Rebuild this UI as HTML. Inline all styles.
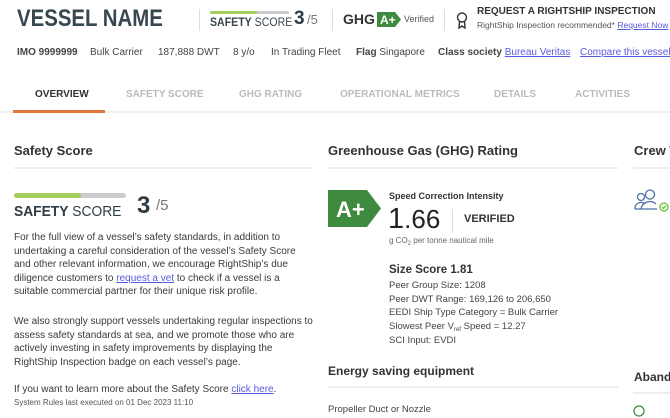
<!DOCTYPE html>
<html><head><meta charset="utf-8"><style>
*{margin:0;padding:0;box-sizing:border-box}
body{width:670px;height:413px;overflow:hidden;background:#fff;font-family:"Liberation Sans",sans-serif;color:#333;position:relative}
.a{position:absolute;white-space:nowrap}
.dv{position:absolute;width:1px;background:#ddd}
.hl{position:absolute;height:2px;background:#eee}
.tab{position:absolute;top:89px;font-size:10px;font-weight:bold;color:#bbb}
a{color:#5a5ae0;text-decoration:underline}
.p{position:absolute;left:14px;font-size:10px;line-height:13.6px;color:#3a3a3a;width:300px}
.m{font-size:10px;color:#444}
sub{line-height:0;vertical-align:-2px}
</style></head><body>
<div class="a" style="left:17px;top:5px;font-size:24px;font-weight:bold;color:#37474f;transform:scaleX(0.85);transform-origin:0 0">VESSEL NAME</div>
<div class="dv" style="left:199px;top:9px;height:22px"></div>
<div class="a" style="left:210px;top:11px;width:79px;height:3px;background:#ccc;border-radius:2px"></div>
<div class="a" style="left:210px;top:11px;width:47px;height:3px;background:#a5cf5b;border-radius:2px"></div>
<div class="a" style="left:210px;top:17px;font-size:11.5px;color:#37474f;transform:scaleX(0.92);transform-origin:0 0"><b>SAFETY</b> SCORE</div>
<div class="a" style="left:294px;top:8px;font-size:19px;font-weight:bold;color:#2f3b45">3</div>
<div class="a" style="left:307px;top:12px;font-size:13px;color:#777">/5</div>
<div class="dv" style="left:332px;top:9px;height:22px"></div>
<div class="a" style="left:343px;top:11px;font-size:14px;font-weight:bold;color:#333">GHG</div>
<svg class="a" style="left:377px;top:12px" width="24" height="15"><polygon points="0,0 18,0 24,7.5 18,15 0,15" fill="#3e8a3e"/><text x="3" y="12" font-size="12" font-weight="bold" fill="#fff" font-family="Liberation Sans">A+</text></svg>
<div class="a" style="left:404px;top:14px;font-size:9px;color:#555">Verified</div>
<div class="dv" style="left:444px;top:9px;height:22px"></div>
<svg class="a" style="left:456px;top:12px" width="12" height="17" fill="none" stroke="#333" stroke-width="1.4"><circle cx="6" cy="5.5" r="4.5"/><path d="M3.5 9.5 L3 16 L6 14 L9 16 L8.5 9.5"/></svg>
<div class="a" style="left:477px;top:6px;font-size:10px;font-weight:bold;color:#333">REQUEST A RIGHTSHIP INSPECTION</div>
<div class="a" style="left:477px;top:20px;font-size:8.5px;color:#555">RightShip Inspection recommended* <a>Request Now</a></div>
<div class="a m" style="left:17px;top:47px"><b>IMO 9999999</b></div>
<div class="a m" style="left:90px;top:47px">Bulk Carrier</div>
<div class="a m" style="left:158px;top:47px">187,888 DWT</div>
<div class="a m" style="left:233px;top:47px">8 y/o</div>
<div class="a m" style="left:271px;top:47px">In Trading Fleet</div>
<div class="a m" style="left:356px;top:47px"><b>Flag</b> Singapore</div>
<div class="a m" style="left:438px;top:47px"><b>Class society</b> <a>Bureau Veritas</a></div>
<div class="a m" style="left:580px;top:47px"><a>Compare this vessel</a></div>
<div class="tab" style="left:35px;color:#333">OVERVIEW</div>
<div class="tab" style="left:126px">SAFETY SCORE</div>
<div class="tab" style="left:239px">GHG RATING</div>
<div class="tab" style="left:340px">OPERATIONAL METRICS</div>
<div class="tab" style="left:494px">DETAILS</div>
<div class="tab" style="left:575px">ACTIVITIES</div>
<div class="hl" style="left:0;top:111px;width:670px;background:#f0f0f0"></div>
<div class="a" style="left:13px;top:110px;width:92px;height:3px;background:#e07a3c"></div>

<div class="a" style="left:14px;top:143px;font-size:13px;font-weight:bold;color:#333">Safety Score</div>
<div class="hl" style="left:14px;top:167px;width:298px"></div>
<div class="a" style="left:14px;top:193px;width:112px;height:5px;background:#ccc;border-radius:3px"></div>
<div class="a" style="left:14px;top:193px;width:67px;height:5px;background:#a5cf5b;border-radius:3px"></div>
<div class="a" style="left:14px;top:203px;font-size:15px;color:#2f3b45;transform:scaleX(0.92);transform-origin:0 0"><b>SAFETY</b> SCORE</div>
<div class="a" style="left:137px;top:192px;font-size:24px;font-weight:bold;color:#2f3b45">3</div>
<div class="a" style="left:156px;top:197px;font-size:15px;color:#777">/5</div>
<div class="p" style="top:231px">For the full view of a vessel’s safety standards, in addition to undertaking a careful consideration of the vessel’s Safety Score and other relevant information, we encourage RightShip’s due diligence customers to <a>request a vet</a> to check if a vessel is a suitable commercial partner for their unique risk profile.</div>
<div class="p" style="top:315px">We also strongly support vessels undertaking regular inspections to assess safety standards at sea, and we promote those who are actively investing in safety improvements by displaying the RightShip Inspection badge on each vessel’s page.</div>
<div class="p" style="top:383px">If you want to learn more about the Safety Score <a>click here</a>.</div>
<div class="a" style="left:14px;top:398px;font-size:8px;color:#555">System Rules last executed on 01 Dec 2023 11:10</div>

<div class="a" style="left:328px;top:143px;font-size:13px;font-weight:bold;color:#333">Greenhouse Gas (GHG) Rating</div>
<div class="hl" style="left:328px;top:167px;width:290px"></div>
<svg class="a" style="left:328px;top:190px" width="53" height="37"><polygon points="0,0 39,0 53,18.5 39,37 0,37" fill="#3e8a3e"/><text x="8" y="27" font-size="22" font-weight="bold" fill="#fff" font-family="Liberation Sans">A+</text></svg>
<div class="a" style="left:389px;top:191px;font-size:9px;font-weight:bold;color:#333">Speed Correction Intensity</div>
<div class="a" style="left:388px;top:203px;font-size:29px;color:#222">1<span style="font-size:26px">.66</span></div>
<div class="dv" style="left:452px;top:209px;height:24px"></div>
<div class="a" style="left:464px;top:213px;font-size:11px;font-weight:bold;color:#333">VERIFIED</div>
<div class="a" style="left:389px;top:236px;font-size:8px;color:#666">g CO<sub style="font-size:6px">2</sub> per tonne nautical mile</div>
<div class="a" style="left:389px;top:264px;font-size:11.5px;font-weight:bold;color:#333">Size Score 1.81</div>
<div class="a" style="left:389px;top:279px;font-size:9.5px;line-height:13.7px;color:#444">Peer Group Size: 1208<br>Peer DWT Range: 169,126 to 206,650<br>EEDI Ship Type Category = Bulk Carrier<br>Slowest Peer V<sub style="font-size:6px">ref</sub> Speed = 12.27<br>SCI Input: EVDI</div>
<div class="a" style="left:328px;top:364px;font-size:12px;font-weight:bold;color:#333">Energy saving equipment</div>
<div class="hl" style="left:328px;top:386px;width:290px"></div>
<div class="a" style="left:328px;top:404px;font-size:9.5px;color:#444">Propeller Duct or Nozzle</div>

<div class="a" style="left:634px;top:143px;font-size:13px;font-weight:bold;color:#333">Crew W</div>
<div class="hl" style="left:633px;top:167px;width:40px"></div>
<svg class="a" style="left:633px;top:189px" width="36" height="24" fill="none" stroke="#4a6fa5" stroke-width="1.3"><circle cx="8" cy="8" r="3.5"/><circle cx="17" cy="5.5" r="4.5"/><path d="M2 20a6 6 0 0 1 10-5"/><path d="M8 20a9 9 0 0 1 15-5"/><path d="M2 20h22"/><circle cx="31" cy="18" r="4" stroke="#6bbf3a"/><path d="M29 18l1.5 1.5 2.5-3" stroke="#6bbf3a"/></svg>
<div class="a" style="left:634px;top:370px;font-size:12px;font-weight:bold;color:#333">Abando</div>
<div class="hl" style="left:633px;top:392px;width:40px"></div>
<svg class="a" style="left:633px;top:404px" width="14" height="14" fill="none" stroke="#3e8a3e" stroke-width="1.3"><circle cx="6" cy="7" r="5"/></svg>
</body></html>
